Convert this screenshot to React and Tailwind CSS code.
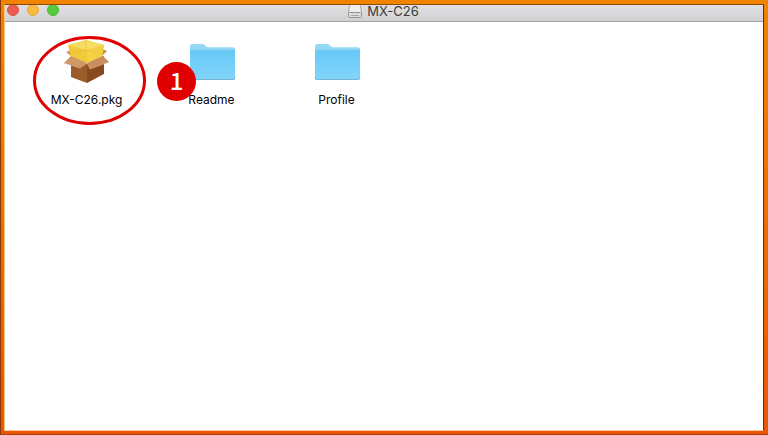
import clsx from "clsx";

const controls = [
  { label: "Close", color: "bg-[#ee5b52] border-[#d9544c]" },
  { label: "Minimize", color: "bg-[#f6bb40] border-[#e2a83c]" },
  { label: "Zoom", color: "bg-[#57cb3e] border-[#4bb336]" },
];

const files = [
  { name: "MX-C26.pkg", icon: PackageIcon, circled: true },
  { name: "Readme", icon: FolderIcon, step: 1 },
  { name: "Profile", icon: FolderIcon },
];

function PackageIcon() {
  return (
    <svg className="h-12 w-12" viewBox="0 0 48 48" aria-hidden="true">
      {/* Back flaps */}
      <path d="M8 18L3 14l6-2 8 4z" fill="#c9925f" />
      <path d="M39 18l5-5-5-2-6 3z" fill="#c58a55" />
      {/* Box body */}
      <path d="M8 20l16 6v19L8 39z" fill="#9a5c2b" />
      <path d="M24 26l17-8v18L24 45z" fill="#87491d" />
      {/* Glowing contents */}
      <path d="M5 7l18-5 18 5-2 12-15 6L8 19z" fill="#f3cf40" />
      <path d="M5 7l19 5v13L8 19z" fill="#f0ca3a" />
      <path d="M24 12l17-5-2 12-15 6z" fill="#f3d045" />
      <path d="M5 7l18-5 18 5-17 5z" fill="#f6dc62" />
      <path
        d="M7 16l16-4 17 4M23 2v10"
        fill="none"
        stroke="#e3bb30"
        strokeWidth="1"
        opacity=".5"
      />
      {/* Front flaps */}
      <path d="M8 18l16 7-7 5L1 25z" fill="#cf9869" />
      <path d="M24 25l16-7 6 6-19 7z" fill="#c98d60" />
      <path d="M1 25l16 5 7-5 3 6 19-7" fill="none" stroke="#deb08a" strokeWidth=".6" />
    </svg>
  );
}

function FolderIcon() {
  return (
    <svg className="h-12 w-12" viewBox="0 0 48 48" aria-hidden="true">
      <defs>
        <linearGradient id="folder-front" x1="0" y1="0" x2="0" y2="1">
          <stop offset="0" stopColor="#67c8f6" />
          <stop offset="1" stopColor="#82d5fa" />
        </linearGradient>
      </defs>
      <path
        d="M2 40V8.500Q2 6 4.500 6H14q1.500 0 2.500 1l1.500 1.500q1 .8 2.500.8H44.500Q47 9.300 47 12v28z"
        fill="#94d8f4"
      />
      <path d="M2 12h45v28q0 2-2 2H4q-2 0-2-2z" fill="url(#folder-front)" />
      <path d="M2 12h45" stroke="#7cccf0" strokeWidth="1" />
      <path
        d="M2 39.500q0 2 2 2h41q2 0 2-2"
        fill="none"
        stroke="#78b5d2"
        strokeWidth="1"
      />
    </svg>
  );
}

function DriveIcon() {
  return (
    <svg className="h-3.5 w-4" viewBox="0 0 16 14" aria-hidden="true">
      <path d="M2 0h12v8H2z" fill="#efeff0" />
      <path d="M2.500 0L1.500 8M13.500 0l1 8" stroke="#a9a9ab" />
      <rect x="1.500" y="7.500" width="13" height="5" rx="1" fill="#dededf" stroke="#929295" />
      <path d="M4 10.500h8" stroke="#a5a5a8" />
    </svg>
  );
}

function FileItem({ file }) {
  const Icon = file.icon;

  return (
    <li className="relative flex w-[125px] shrink-0 flex-col items-center">
      <Icon />
      <span className="mt-1.5 text-xs leading-4 text-black">{file.name}</span>

      {file.circled && (
        <svg
          className="absolute -top-1 left-1.5 h-[92px] w-[120px]"
          viewBox="0 0 120 92"
          aria-hidden="true"
        >
          <ellipse
            cx="59.500"
            cy="46.500"
            rx="55"
            ry="43"
            fill="none"
            stroke="#e00000"
            strokeWidth="3"
          />
        </svg>
      )}

      {file.step && (
        <span
          className={clsx(
            "absolute top-6 left-2 flex size-[39px] items-center justify-center pb-1",
            "rounded-full bg-[#e00000] font-['Noto_Sans_CJK_JP',sans-serif] text-2xl leading-6 font-medium text-white"
          )}
        >
          {file.step}
        </span>
      )}
    </li>
  );
}

export default function App() {
  return (
    <div className="flex min-h-screen flex-col border-b border-l border-b-[#b63c00] border-l-[#8a3a05] bg-linear-to-b from-[#f08300] to-[#ea5504] pt-1 pr-1 pb-[3px] pl-[3px] font-[Inter,sans-serif]">
      <main className="flex grow flex-col border border-t-[#8f4a00] border-r-[#6b2c05] border-b-[#ffc9a0] border-l-[#ffc487] bg-white">
        <header className="relative flex h-[17px] justify-center border-b border-[#a3a3a3] bg-linear-to-b from-[#e0dfe1] to-[#d2d1d3] pr-0.5">
          <div className="absolute top-0 left-0.5 flex gap-2 overflow-hidden">
            {controls.map((control) => (
              <button
                key={control.label}
                type="button"
                aria-label={control.label}
                className={clsx("-mt-px size-3 rounded-full border", control.color)}
              />
            ))}
          </div>
          <div className="flex items-start gap-1">
            <DriveIcon />
            <h1 className="text-[13px] leading-3 text-[#3c3c3c]">MX-C26</h1>
          </div>
        </header>

        <ul className="flex px-[19px] py-4">
          {files.map((file) => (
            <FileItem key={file.name} file={file} />
          ))}
        </ul>
      </main>
    </div>
  );
}
